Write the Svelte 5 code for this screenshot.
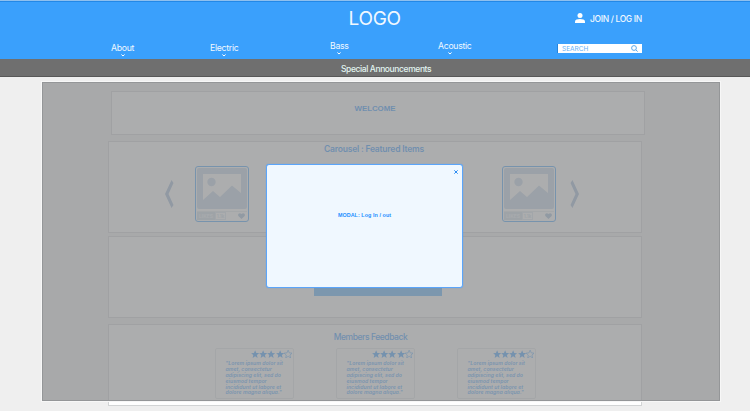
<script>
  const links = [
    { name: 'About', left: 111, top: 0 },
    { name: 'Electric', left: 76, top: 0 },
    { name: 'Bass', left: 92, top: -2 },
    { name: 'Acoustic', left: 90, top: -2 }
  ];
  const quote = ['"Lorem ipsum dolor sit', 'amet, consectetur', 'adipiscing elit, sed do', 'eiusmod tempor', 'incididunt ut labore et', 'dolore magna aliqua."'];
  const reviews = [quote, quote, quote];
  const starPath = 'M5 .2 6.4 3.5 9.9 3.8 7.200 6.100 8 9.600 5 7.700 2 9.600 2.800 6.100 .1 3.800 3.600 3.500Z';
</script>

{#snippet product()}
  <div class="product">
    <svg class="photo" width="50" height="41" viewBox="0 0 50 41">
      <path fill-rule="evenodd" d="M2 0H48Q50 0 50 2V39Q50 41 48 41H2Q0 41 0 39V2Q0 0 2 0ZM6 6V32L16 23 23 29 35 17.500 44 25V6Z" />
      <circle cx="14.500" cy="14" r="4.200" />
    </svg>
    <div class="meta">
      <span class="likes">LIKES</span><span class="count">1.1k</span>
      <svg class="heart" width="7" height="6" viewBox="0 0 14 12"><path d="M7 12 1.200 6.300C-1.500 3 2-1.800 7 1.800 12-1.800 15.500 3 12.800 6.300Z" /></svg>
    </div>
  </div>
{/snippet}

<div class="page">
  <header>
    <div class="top">
      <div class="logo">LOGO</div>
      <div class="account">
        <svg width="10" height="10" viewBox="0 0 20 20"><circle cx="10" cy="5" r="5" /><path d="M0 20V17C0 13.500 5 12 10 12S20 13.500 20 17V20Z" /></svg>
        <span>JOIN / LOG IN</span>
      </div>
    </div>
    <nav>
      {#each links as link}
        <div class="link" style="margin-left:{link.left}px;margin-top:{link.top}px">
          <span>{link.name}</span>
          <svg width="4" height="3" viewBox="0 0 4 3"><path d="M.4 .5 2 2 3.600 .5" /></svg>
        </div>
      {/each}
      <div class="search">
        <span>SEARCH</span>
        <svg width="7" height="7" viewBox="0 0 7 7"><circle cx="3" cy="3" r="2.400" /><path d="M4.800 4.800 6.700 6.600" /></svg>
      </div>
    </nav>
  </header>
  <div class="announce"><span>Special Announcements</span></div>

  <main>
    <section class="welcome"><h2>WELCOME</h2></section>
    <section class="carousel">
      <h2>Carousel : Featured Items</h2>
      <div class="track">
        <svg class="arrow" width="9" height="28" viewBox="0 0 9 28"><path d="M6.500 0 0 14 6.500 28 8.500 25 3.500 14 8.500 3Z" /></svg>
        {@render product()}
        <div class="gap"></div>
        {@render product()}
        <svg class="arrow" width="9" height="28" viewBox="0 0 9 28"><path d="M2.500 0 9 14 2.500 28 .5 25 5.500 14 .5 3Z" /></svg>
      </div>
    </section>
    <section class="action"><div class="button"></div></section>
    <section class="feedback">
      <h2>Members Feedback</h2>
      <div class="reviews">
        {#each reviews as lines}
          <article>
            <div class="stars">
              {#each [1, 1, 1, 1, 0] as full}
                <svg width="8.250" height="8.250" viewBox="0 0 10 10"><path class:empty={!full} d={starPath} /></svg>
              {/each}
            </div>
            <p>{#each lines as line}<span>{line}</span>{/each}</p>
          </article>
        {/each}
      </div>
    </section>
  </main>

  <div class="overlay"></div>
  <div class="modal">
    <svg class="close" width="4" height="4" viewBox="0 0 4 4"><path d="M.3 .3 3.700 3.700M3.700 .3 .3 3.700" /></svg>
    <span>MODAL: Log In / out</span>
  </div>
</div>

<style>
  .page { position: relative; width: 750px; height: 411px; overflow: hidden; background: #efefef; font-family: Inter, "Liberation Sans", sans-serif; color: #1e90ff; }
  .page * { box-sizing: border-box; }
  svg { display: block; flex: none; }
  span { white-space: nowrap; }
  header { height: 59px; background: #3aa0fc; border-top: 1px solid #8fc0ee; color: #f0f8ff; box-shadow: inset 0 1px #2388e6; }
  .top { display: flex; height: 36px; }
  .logo { margin-left: 348.500px; width: 226.500px; font-size: 19px; line-height: 36px; letter-spacing: -0.3px; font-weight: 400; }
  .account { display: flex; gap: 5px; font-size: 8.500px; line-height: 36px; letter-spacing: -0.34px; font-weight: 500; }
  .account svg { margin-top: 12px; fill: #fff; }
  nav { display: flex; height: 22px; align-items: flex-start; }
  .link { width: 23px; flex: none; padding-top: 6px; font-size: 8.700px; line-height: 11px; letter-spacing: -0.28px; }
  .link:nth-child(2) { width: 28px; }
  .link:nth-child(3) { width: 18px; }
  .link:nth-child(4) { width: 33px; }
  .link span { display: block; }
  .link svg { margin: 0 auto; fill: none; stroke: #fff; stroke-width: 1; }
  .link:nth-child(4) svg { margin-left: 10px; }
  .search { display: flex; justify-content: space-between; align-items: center; margin: 7px 0 0 86px; width: 85px; height: 9px; padding: 0 4px; background: #fff; font-size: 6.500px; color: #64b0f7; border-left: 1px solid #2684da; }
  .search svg { fill: none; stroke: #4b9fe8; stroke-width: .9; }
  .announce { height: 18px; background: #6f6f6f; border-bottom: 1px solid #585858; color: #e1f4ef; font-size: 8.500px; letter-spacing: -0.4px; line-height: 20px; font-weight: 500; padding-left: 341px; }
  main { padding: 14px 0 0 108px; }
  section { width: 534px; background: #fff; border: 1px solid #d2d4d5; text-align: center; }
  h2 { margin: 0; font-size: 8.500px; line-height: 12px; font-weight: 600; letter-spacing: -0.2px; }
  .welcome { height: 44px; margin: 0 0 6px 3px; padding: 11px 6px 0 0; }
  .welcome h2 { font: 700 7.900px/12px "Liberation Sans", sans-serif; letter-spacing: -0.05px; }
  .carousel { height: 92px; margin-bottom: 3px; }
  .carousel h2 { padding: 1px 2px 0 0; }
  .track { display: flex; padding: 11px 0 0 56px; }
  .arrow { margin-top: 14px; fill: #9ab5d5; }
  .product { width: 54px; height: 56px; margin-left: 21px; border: 1px solid #3d9ffa; border-radius: 3px; padding: 1px; }
  .gap { width: 232px; }
  .product + .arrow { margin-left: 14px; }
  .photo { fill: #c0d3e7; }
  .meta { display: flex; margin-top: 2px; height: 9px; font-size: 5px; line-height: 9px; font-weight: 700; border-top: 1px solid #e2e7ec; }
  .likes { width: 18px; background: #ccd9e6; color: #edf4fb; }
  .count { width: 11px; color: #ccdae8; border: 1px solid #dbe4ee; line-height: 7px; font-size: 4.500px; }
  .heart { margin: 1px 0 0 12px; fill: #9bb7d6; }
  .action { height: 82px; margin-bottom: 6px; padding: 49px 0 0 205px; }
  .button { width: 128px; height: 10px; background: #4facff; }
  .feedback { height: 82px; padding: 6px 9px 0 0; }
  .feedback h2 { font-weight: 500; font-size: 8.500px; letter-spacing: -0.42px; }
  .reviews { display: flex; gap: 42px; padding: 5px 0 0 106px; }
  article { width: 79px; height: 51px; border: 1px solid #e2e5e7; border-radius: 2px; text-align: left; flex: none; }
  .stars { display: flex; justify-content: flex-end; padding-right: 1px; height: 9px; }
  .stars svg { fill: #369bff; margin-top: 1px; }
  .stars .empty { fill: none; stroke: #369bff; stroke-width: .8; }
  p { margin: 3px 0 0 9.500px; font: italic 600 5.150px/5.880px Inter, sans-serif; color: #42a1ff; letter-spacing: .06px; }
  p span { display: block; }
  .overlay { position: absolute; left: 42px; top: 82px; width: 678px; height: 319px; background: rgba(141, 142, 144, .73); border: 1px solid #949698; box-shadow: 0 0 0 1px #f7f7f7; }
  .modal { position: absolute; left: 266px; top: 164px; width: 197px; height: 124px; border: 1px solid #5ba5fa; border-radius: 3px; background: #f0f8ff; box-shadow: 0 0 1px #4998f3; display: flex; justify-content: center; padding-top: 46px; font: 700 5.400px/9px "Liberation Sans", sans-serif; letter-spacing: .06px; }
  .close { position: absolute; right: 4px; top: 5px; stroke: #1680f0; stroke-width: .9; }
</style>
